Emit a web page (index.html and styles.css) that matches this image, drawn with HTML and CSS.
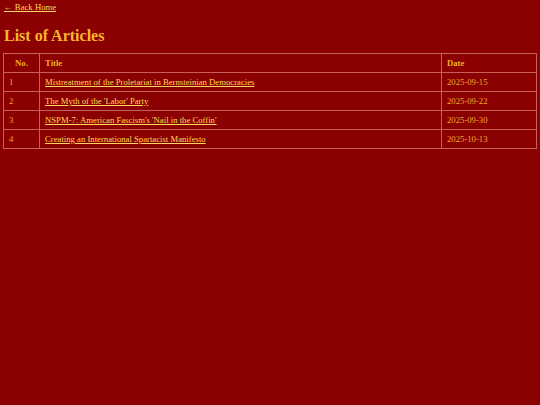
FILE: index.html
```html
<!DOCTYPE html>
<html>
<head>
<meta charset="utf-8">
<link rel="stylesheet" href="styles.css">
</head>
<body>
<a class="back" href="#">← Back Home</a>
<h1 class="title">List of Articles</h1>
<table class="articles">
<thead>
<tr><th class="no">No.</th><th class="ttl">Title</th><th class="date">Date</th></tr>
</thead>
<tbody>
<tr><td>1</td><td><a href="#">Mistreatment of the Proletariat in Bernsteinian Democracies</a></td><td>2025-09-15</td></tr>
<tr><td>2</td><td><a href="#">The Myth of the 'Labor' Party</a></td><td>2025-09-22</td></tr>
<tr><td>3</td><td><a href="#">NSPM-7: American Fascism's 'Nail in the Coffin'</a></td><td>2025-09-30</td></tr>
<tr><td>4</td><td><a href="#">Creating an International Spartacist Manifesto</a></td><td>2025-10-13</td></tr>
</tbody>
</table>
</body>
</html>
```
FILE: styles.css
```css
html, body {
  background: #8b0000;
}
body {
  margin: 0;
  padding: 2px 3px;
  font-family: "Liberation Serif", serif;
  font-size: 8.7px;
  color: #f0b020;
}
a {
  color: #ffd75a;
}
.back {
  display: inline-block;
  margin-left: 1px;
}
.title {
  font-size: 16px;
  font-weight: bold;
  color: #f5b82a;
  margin: 14px 1px 7px;
  line-height: 20px;
}
.articles {
  width: 100%;
  border-collapse: collapse;
}
.articles th, .articles td {
  border: 1px solid #c8605a;
  height: 18px;
  padding: 0 5px;
  text-align: left;
  font-size: 8.7px;
}
.articles th {
  font-weight: bold;
}
.articles th.no {
  text-align: center;
  width: 25px;
}
.articles th.date {
  width: 84px;
}
.articles td {
  color: #f0a830;
}
```
